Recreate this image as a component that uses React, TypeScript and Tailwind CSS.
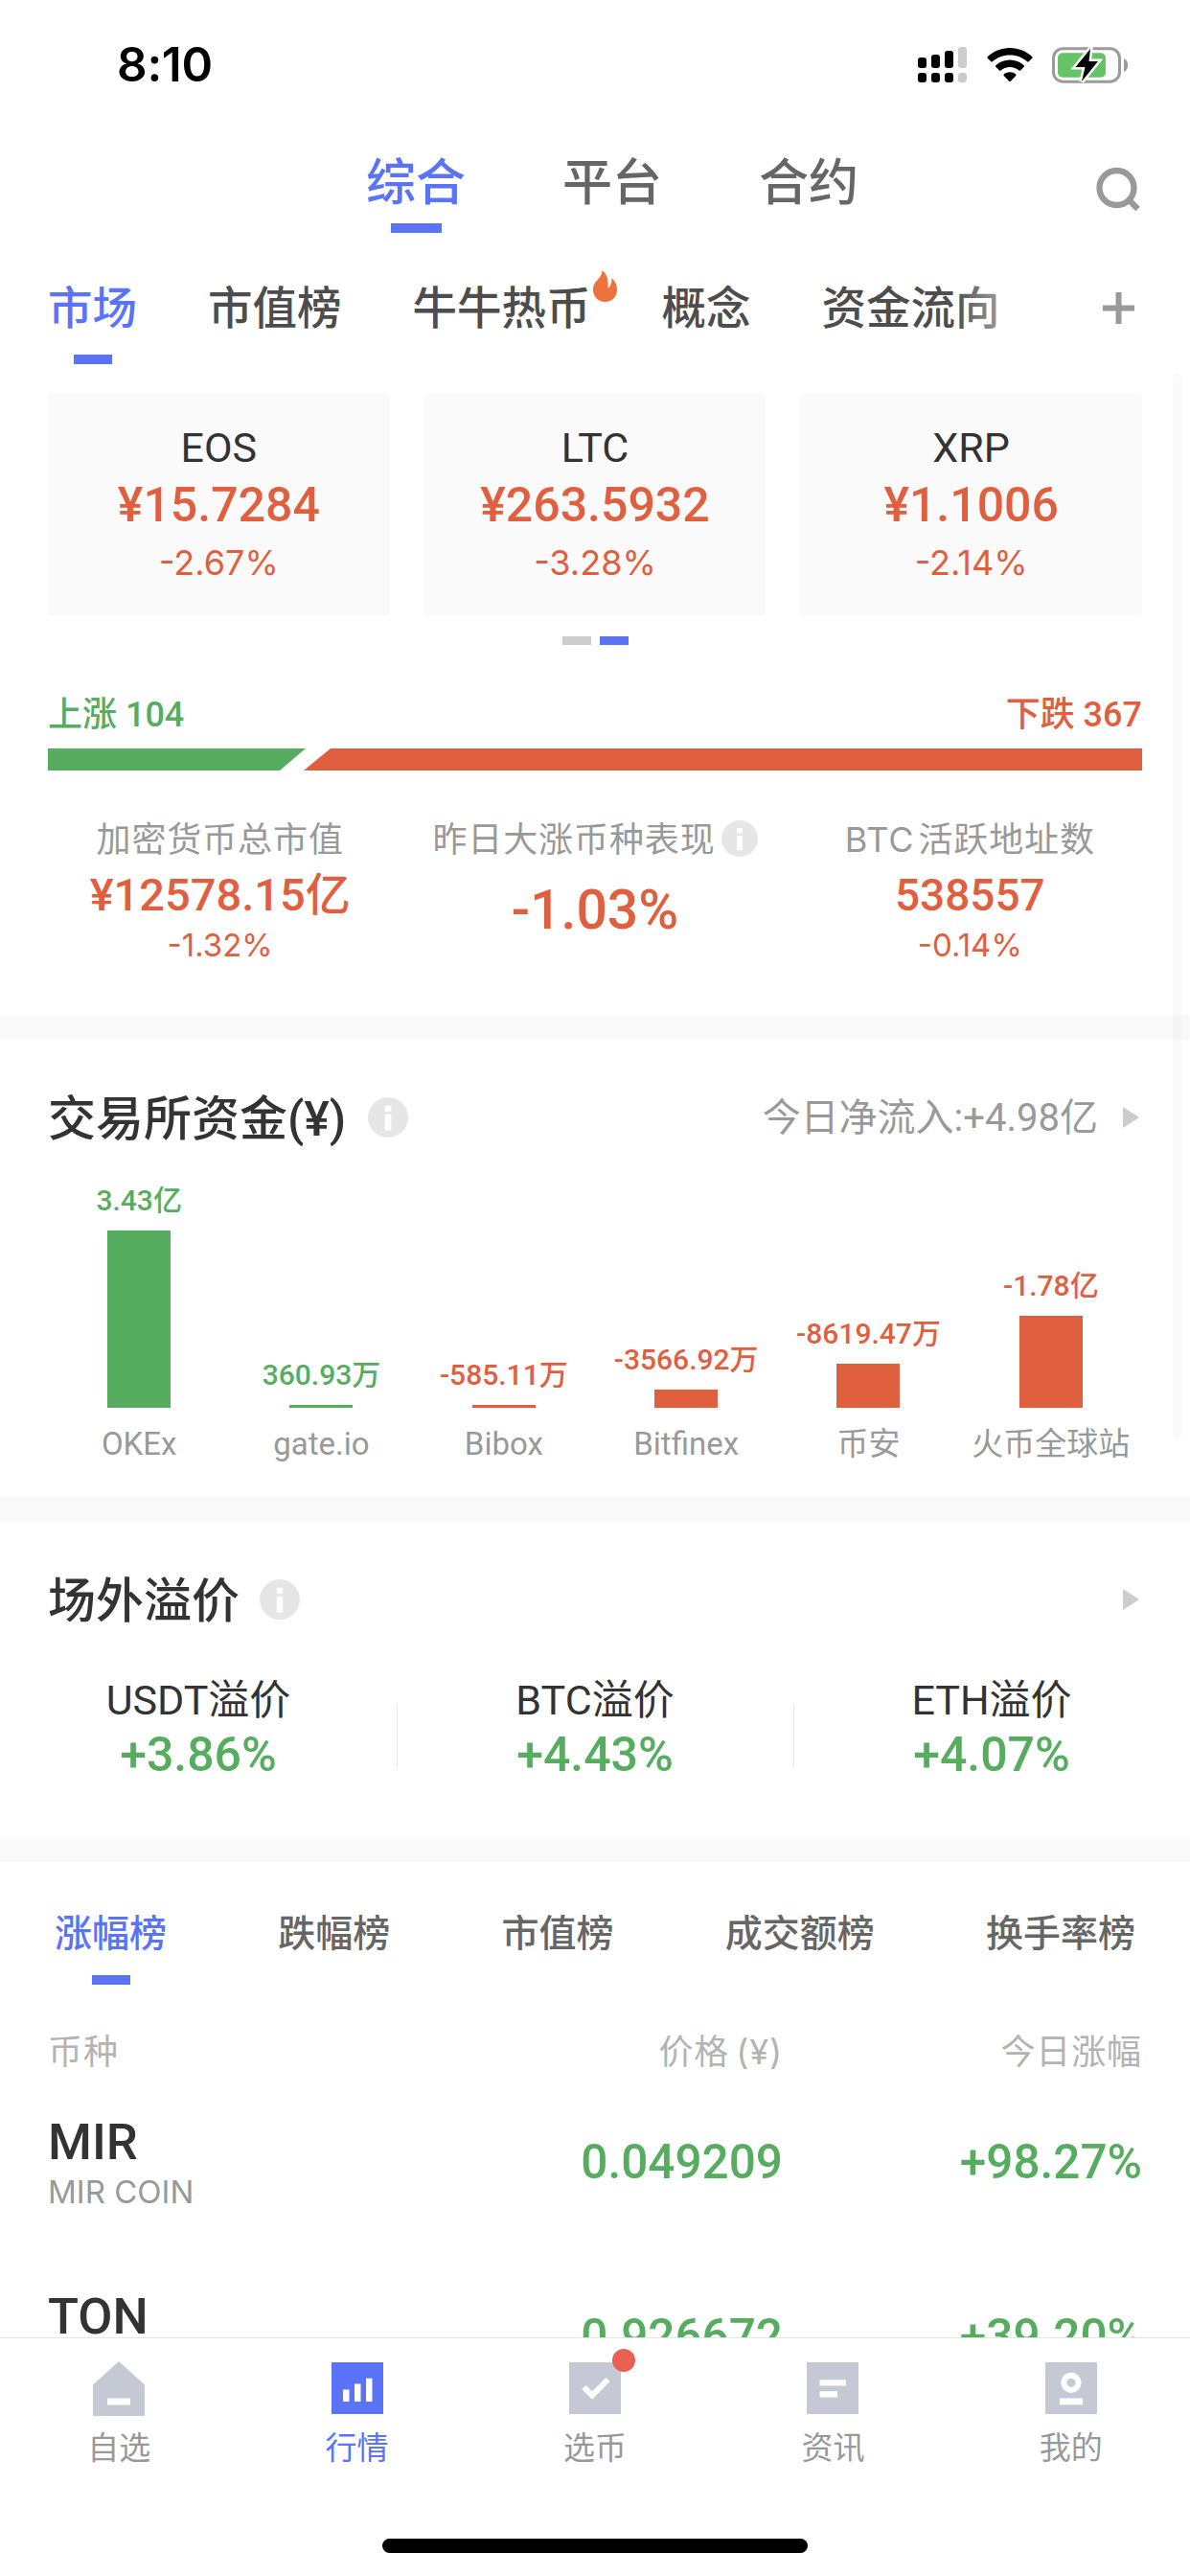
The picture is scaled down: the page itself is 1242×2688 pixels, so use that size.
import type { ReactNode } from 'react'

const TOP_TABS = ['综合', '平台', '合约']

const SUB_TABS = [
  { label: '市场' },
  { label: '市值榜' },
  { label: '牛牛热币', hot: true },
  { label: '概念' },
  { label: '资金流向' },
]

const COINS = [
  { name: 'EOS', price: '¥15.7284', change: '-2.67%' },
  { name: 'LTC', price: '¥263.5932', change: '-3.28%' },
  { name: 'XRP', price: '¥1.1006', change: '-2.14%' },
]

const FLOWS = [
  { name: 'OKEx', value: '3.43亿', height: 185, up: true },
  { name: 'gate.io', value: '360.93万', height: 3, up: true },
  { name: 'Bibox', value: '-585.11万', height: 3, up: false },
  { name: 'Bitfinex', value: '-3566.92万', height: 19, up: false },
  { name: '币安', value: '-8619.47万', height: 46, up: false },
  { name: '火币全球站', value: '-1.78亿', height: 96, up: false },
]

const PREMIUMS = [
  { name: 'USDT溢价', value: '+3.86%' },
  { name: 'BTC溢价', value: '+4.43%' },
  { name: 'ETH溢价', value: '+4.07%' },
]

const RANK_TABS = ['涨幅榜', '跌幅榜', '市值榜', '成交额榜', '换手率榜']

const RANKS = [
  { symbol: 'MIR', name: 'MIR COIN', price: '0.049209', change: '+98.27%' },
  { symbol: 'TON', name: 'TON', price: '0.926672', change: '+39.20%' },
]

const SF = "font-['Inter','Noto_Sans_CJK_SC',sans-serif]"

function StatusBar() {
  return (
    <div className="flex h-[135px] items-center justify-between pr-[64px] pl-[122px]">
      <span className="font-['Inter',sans-serif] text-[49.5px] leading-none font-semibold tracking-[-0.3px] text-black">
        8:10
      </span>
      <div className="flex items-center gap-[20px]">
        <svg className="h-[38px] w-[52px]" viewBox="0 0 52 38">
          <rect x="0" y="11" width="9" height="11" rx="3" />
          <rect x="14" y="8" width="9" height="14" rx="3" />
          <rect x="28" y="4" width="9" height="18" rx="3" />
          <rect x="42" y="0" width="9" height="22" rx="3" fill="#cccccc" />
          <rect x="0" y="27" width="9" height="10" rx="3" />
          <rect x="14" y="27" width="9" height="10" rx="3" />
          <rect x="28" y="27" width="9" height="10" rx="3" />
          <rect x="42" y="27" width="9" height="10" rx="3" fill="#cccccc" />
        </svg>
        <svg className="h-[36px] w-[48px]" viewBox="0 0 48 36">
          <path d="M24 0C33 0 41.500 3.500 47.300 9.300Q48 10 47.300 10.700L43.700 14.300Q43 15 42.200 14.300C37.300 9.800 31 7.400 24 7.400S10.700 9.800 5.800 14.300Q5 15 4.300 14.300L.7 10.700Q0 10 .7 9.300C6.500 3.500 15 0 24 0Z" />
          <path d="M24 12.600C29.600 12.600 34.800 14.700 38.700 18.300Q39.500 19 38.700 19.800L35 23.500Q34.300 24.200 33.500 23.500C30.900 21.200 27.600 20 24 20S17.100 21.200 14.500 23.500Q13.700 24.200 13 23.500L9.300 19.800Q8.500 19 9.300 18.300C13.200 14.700 18.400 12.600 24 12.600Z" />
          <path d="M24 25.300C26.400 25.300 28.500 26.100 30.300 27.500Q31 28.200 30.300 28.900L24.800 34.800Q24 35.500 23.200 34.800L17.700 28.900Q17 28.200 17.700 27.500C19.500 26.100 21.600 25.300 24 25.300Z" />
        </svg>
        <svg className="h-[40px] w-[80px]" viewBox="0 0 80 40">
          <rect x="1.500" y="2.700" width="69" height="34.500" rx="10" fill="none" stroke="#9b9b9b" strokeWidth="3" />
          <rect x="6" y="7.300" width="50" height="25.500" rx="5" fill="#65c466" />
          <path d="M75 13C78 14.500 79.200 17 79.200 20S78 25.500 75 27Z" fill="#9b9b9b" />
          <path
            d="M40 3L24.500 22H34.500L31 37L48 16H38.500Z"
            fill="#000"
            stroke="#fff"
            strokeWidth="5"
            paintOrder="stroke"
          />
        </svg>
      </div>
    </div>
  )
}

function InfoIcon({ className }: { className: string }) {
  return (
    <svg className={className} viewBox="0 0 42 42">
      <circle cx="21" cy="21" r="21" fill="#e6e6e6" />
      <rect x="17.800" y="8.800" width="6.400" height="6.200" rx="1" fill="#fff" />
      <rect x="17.800" y="17.800" width="6.400" height="16.800" rx="1" fill="#fff" />
    </svg>
  )
}

function Arrow() {
  return (
    <svg className="h-[22px] w-[17px]" viewBox="0 0 17 22">
      <path d="M0 0L17 11L0 22Z" fill="#cccccc" />
    </svg>
  )
}

function Flame() {
  return (
    <svg className="absolute -top-[17px] left-full ml-[2px] h-[33px] w-[25px]" viewBox="0 0 25 33">
      <path
        d="M9.300 0C14 3.500 16.200 8.500 15.600 18.700C18.200 17 19.800 13.500 19.300 8C23 11 25 15.500 25 20.500C25 27.500 19.500 33 12.500 33S0 27.500 0 20.500C0 14 3 12 6 8.500C8.300 5.700 9.700 3.500 9.300 0Z"
        fill="#ee723c"
      />
    </svg>
  )
}

function Divider({ className }: { className: string }) {
  return <div className={`w-full shrink-0 bg-[#f9f9f9] ${className}`} />
}

function TopTabs() {
  return (
    <div className="relative flex gap-[101px] pt-[30px] pl-[382px]">
      {TOP_TABS.map((tab, i) => (
        <div key={tab} className="flex flex-col items-center">
          <span
            className={`text-[52px] leading-[54px] font-medium ${i === 0 ? 'text-[#5b73f6]' : 'text-[#666666]'}`}
          >
            {tab}
          </span>
          <span className={`mt-[14px] h-[10px] w-[53px] ${i === 0 ? 'bg-[#5b73f6]' : ''}`} />
        </div>
      ))}
      <svg className="absolute top-[39px] right-[52px] h-[48px] w-[48px]" viewBox="0 0 48 48" fill="none">
        <circle cx="23.500" cy="22" r="18" stroke="#999999" strokeWidth="6.300" />
        <path d="M36 34.500L45.500 44" stroke="#999999" strokeWidth="6.300" />
      </svg>
    </div>
  )
}

function SubTabs() {
  return (
    <div className="relative flex gap-[74px] pt-[56px] pl-[50px]">
      {SUB_TABS.map((tab, i) => (
        <div key={tab.label} className="relative flex flex-col items-center">
          <span className="relative">
            <span
              className={`block text-[46.5px] leading-[46px] font-medium whitespace-nowrap ${
                i === 0 ? 'text-[#5b73f6]' : 'text-[#4d4d4d]'
              }`}
            >
              {tab.label}
            </span>
            {tab.hot && <Flame />}
          </span>
          <span className={`mt-[25px] h-[10px] w-[40px] ${i === 0 ? 'bg-[#5b73f6]' : ''}`} />
        </div>
      ))}
      {/* fade over the last tab */}
      <div className="absolute top-[40px] right-[168px] h-[80px] w-[80px] bg-linear-to-r from-white/0 to-white/70" />
      <svg className="absolute top-[62px] right-[58px] h-[33px] w-[33px]" viewBox="0 0 33 33">
        <path d="M0 16.500H33M16.500 0V33" stroke="#999999" strokeWidth="6" />
      </svg>
    </div>
  )
}

function Stat({ label, info, children }: { label: string; info?: boolean; children: ReactNode }) {
  return (
    <div className="flex flex-col items-center text-[#df5f3f]">
      <div className="flex h-[38px] items-center gap-[6px]">
        <span
          className={`${SF} pt-[2px] text-[36px] leading-[38px] tracking-[0.9px] whitespace-nowrap text-[#999999] [word-spacing:-7px]`}
        >
          {label}
        </span>
        {info && <InfoIcon className="h-[38px] w-[38px]" />}
      </div>
      {children}
    </div>
  )
}

function Market() {
  return (
    <section className="h-[669px] shrink-0 pt-[20px]">
      <div className="grid grid-cols-3 gap-[36px] px-[50px]">
        {COINS.map((coin) => (
          <div key={coin.name} className="flex h-[232px] flex-col items-center rounded-[4px] bg-[#fafafa] pt-[36px]">
            <span className="text-[43px] leading-[42px] text-[#333333]">{coin.name}</span>
            <span className="mt-[14px] text-[50px] leading-[50px] font-medium text-[#df5f3f]">{coin.price}</span>
            <span className={`${SF} mt-[17px] text-[36px] leading-[36px] text-[#df5f3f]`}>{coin.change}</span>
          </div>
        ))}
      </div>
      <div className="mt-[22px] flex justify-center gap-[9px]">
        <span className="h-[9px] w-[30px] bg-[#cccccc]" />
        <span className="h-[9px] w-[30px] bg-[#5b73f6]" />
      </div>

      <div className="mt-[55px] flex justify-between px-[50px] text-[36px] leading-[36px] font-medium">
        <span className="text-[#57ad5f]">上涨 104</span>
        <span className="text-[#df5f3f]">下跌 367</span>
      </div>
      <div className="mt-[17px] flex h-[23px] px-[50px]">
        <div className="w-[269px] bg-[#57ad5f] [clip-path:polygon(0_0,100%_0,calc(100%-27px)_100%,0_100%)]" />
        <div className="-ml-[2px] flex-1 bg-[#df5f3f] [clip-path:polygon(28px_0,100%_0,100%_100%,0_100%)]" />
      </div>

      <div className="mx-[34px] mt-[52px] grid grid-cols-3">
        <Stat label="加密货币总市值">
          <span className="mt-[17px] text-[47px] leading-[46px] font-medium">¥12578.15亿</span>
          <span className={`${SF} mt-[12px] text-[33px] leading-[34px]`}>-1.32%</span>
        </Stat>
        <Stat label="昨日大涨币种表现" info>
          <span className="mt-[27px] text-[57px] leading-[58px] font-medium">-1.03%</span>
        </Stat>
        <Stat label="BTC 活跃地址数">
          <span className="mt-[17px] text-[46px] leading-[46px] font-medium">538557</span>
          <span className={`${SF} mt-[12px] text-[33px] leading-[34px]`}>-0.14%</span>
        </Stat>
      </div>
    </section>
  )
}

function ExchangeFunds() {
  return (
    <section className="h-[477px] shrink-0 px-[50px] pt-[56px]">
      <div className="flex h-[50px] items-center">
        <h2 className="pt-[3px] text-[50px] leading-[50px] font-medium text-[#333333]">交易所资金(¥)</h2>
        <InfoIcon className="ml-[23px] h-[42px] w-[42px]" />
        <span className="mr-[26px] ml-auto pt-[2px] text-[40px] leading-[50px] text-[#999999]">
          今日净流入:+4.98亿
        </span>
        <div className="pr-[3px]">
          <Arrow />
        </div>
      </div>
      <div className="grid grid-cols-6">
        {FLOWS.map((flow) => (
          <div key={flow.name} className="flex flex-col items-center">
            <div className="flex h-[278px] flex-col items-center justify-end">
              <span
                className={`mb-[16px] text-[30px] leading-[30px] font-medium whitespace-nowrap ${
                  flow.up ? 'text-[#57ad5f]' : 'text-[#df5f3f]'
                }`}
              >
                {flow.value}
              </span>
              <div
                className={`w-[66px] ${flow.up ? 'bg-[#57ad5f]' : 'bg-[#df5f3f]'}`}
                style={{ height: flow.height }}
              />
            </div>
            <span className="mt-[21px] text-[33px] leading-[34px] whitespace-nowrap text-[#999999]">{flow.name}</span>
          </div>
        ))}
      </div>
    </section>
  )
}

function Premium() {
  return (
    <section className="h-[328px] shrink-0 pt-[55px]">
      <div className="flex h-[50px] items-center px-[50px]">
        <h2 className="pt-[3px] text-[50px] leading-[50px] font-medium text-[#333333]">场外溢价</h2>
        <InfoIcon className="ml-[21px] h-[42px] w-[42px]" />
        <div className="ml-auto pr-[3px]">
          <Arrow />
        </div>
      </div>
      <div className="mt-[59px] grid grid-cols-3">
        {PREMIUMS.map((item, i) => (
          <div key={item.name} className="relative flex flex-col items-center">
            <span className="text-[43px] leading-[42px] text-[#333333]">{item.name}</span>
            <span className="mt-[11px] text-[50px] leading-[50px] font-medium text-[#57ad5f]">{item.value}</span>
            {i > 0 && <i className="absolute top-[25px] left-0 h-[66px] w-px bg-[#e6e6e6]" />}
          </div>
        ))}
      </div>
    </section>
  )
}

function Ranking() {
  return (
    <section className="shrink-0 pt-[56px]">
      <div className="flex justify-between px-[57px]">
        {RANK_TABS.map((tab, i) => (
          <div key={tab} className="flex flex-col items-center">
            <span
              className={`text-[39px] leading-[39px] font-medium ${i === 0 ? 'text-[#5b73f6]' : 'text-[#666666]'}`}
            >
              {tab}
            </span>
            <span className={`mt-[23px] h-[10px] w-[40px] ${i === 0 ? 'bg-[#5b73f6]' : ''}`} />
          </div>
        ))}
      </div>
      <div
        className={`${SF} mt-[52px] mb-[6px] grid grid-cols-[1fr_375px] px-[50px] text-[36px] leading-[36px] tracking-[0.9px] text-[#b3b3b3]`}
      >
        <div className="flex justify-between">
          <span>币种</span>
          <span className="[word-spacing:-4px]">价格 (¥)</span>
        </div>
        <span className="text-right">今日涨幅</span>
      </div>
      {RANKS.map((coin) => (
        <div key={coin.symbol} className="grid h-[182px] grid-cols-[1fr_375px] items-center px-[50px]">
          <div className="flex items-center justify-between">
            <div className="flex flex-col gap-[9px]">
              <span className="text-[52.5px] leading-[54px] font-medium text-[#333333]">{coin.symbol}</span>
              <span className={`${SF} text-[33px] leading-[33px] text-[#999999]`}>{coin.name}</span>
            </div>
            <span className="text-[49.5px] leading-[50px] font-medium text-[#57ad5f]">{coin.price}</span>
          </div>
          <span className="text-right text-[49.5px] leading-[50px] font-medium text-[#57ad5f]">{coin.change}</span>
        </div>
      ))}
    </section>
  )
}

const NAV = [
  {
    label: '自选',
    icon: (
      <>
        <path d="M27 -1L54 23.500V56H0V23.500Z" fill="#c5c9d4" />
        <rect x="15" y="37.500" width="24" height="7" fill="#fff" />
      </>
    ),
  },
  {
    label: '行情',
    active: true,
    icon: (
      <>
        <rect width="54" height="54" fill="#5b73f6" />
        <path d="M12 28.500h6.500v12.500H12zM24 22.500h6.500V41H24zM36 16.800h6.500V41H36z" fill="#fff" />
      </>
    ),
  },
  {
    label: '选币',
    badge: true,
    icon: (
      <>
        <rect width="54" height="54" fill="#c5c9d4" />
        <path d="M15.500 26L24 34.500L40.500 18" fill="none" stroke="#fff" strokeWidth="6" />
      </>
    ),
  },
  {
    label: '资讯',
    icon: (
      <>
        <rect width="54" height="54" fill="#c5c9d4" />
        <path d="M13.500 18.300h27.500v6.200H13.500zM13.500 30.300h18.500v6.200H13.500z" fill="#fff" />
      </>
    ),
  },
  {
    label: '我的',
    icon: (
      <>
        <rect width="54" height="54" fill="#c5c9d4" />
        <circle cx="27" cy="21.300" r="7.600" fill="none" stroke="#fff" strokeWidth="6" />
        <rect x="15" y="37.500" width="24" height="6.800" fill="#fff" />
      </>
    ),
  },
]

function BottomNav() {
  return (
    <nav className="relative z-10 h-[249px] shrink-0 border-t border-[#e5e5e5] bg-white pt-[25px]">
      <div className="grid grid-cols-5">
        {NAV.map((item) => (
          <div key={item.label} className="flex flex-col items-center">
            <div className="relative">
              <svg className="h-[54px] w-[54px] overflow-visible" viewBox="0 0 54 54">
                {item.icon}
              </svg>
              {item.badge && (
                <span className="absolute -top-[14px] -right-[15px] h-[24px] w-[24px] rounded-full bg-[#e86052]" />
              )}
            </div>
            <span
              className={`mt-[19px] text-[33px] leading-[34px] ${item.active ? 'text-[#5b73f6]' : 'text-[#999999]'}`}
            >
              {item.label}
            </span>
          </div>
        ))}
      </div>
      <div className="mx-auto mt-[77px] h-[15px] w-[444px] rounded-full bg-black" />
    </nav>
  )
}

export default function App() {
  return (
    <div className="relative flex h-[2688px] w-[1242px] flex-col overflow-hidden bg-white font-['Roboto','Noto_Sans_CJK_SC',sans-serif]">
      <header className="h-[390px] shrink-0">
        <StatusBar />
        <TopTabs />
        <SubTabs />
      </header>
      <main className="relative flex min-h-0 flex-1 flex-col overflow-hidden">
        <Market />
        <Divider className="h-[26px]" />
        <ExchangeFunds />
        <Divider className="h-[27px]" />
        <Premium />
        <Divider className="h-[26px]" />
        <Ranking />
        {/* scroll indicator */}
        <div className="absolute top-0 right-[9px] h-[1113px] w-[9px] rounded-full bg-black/[0.02]" />
      </main>
      <BottomNav />
    </div>
  )
}
